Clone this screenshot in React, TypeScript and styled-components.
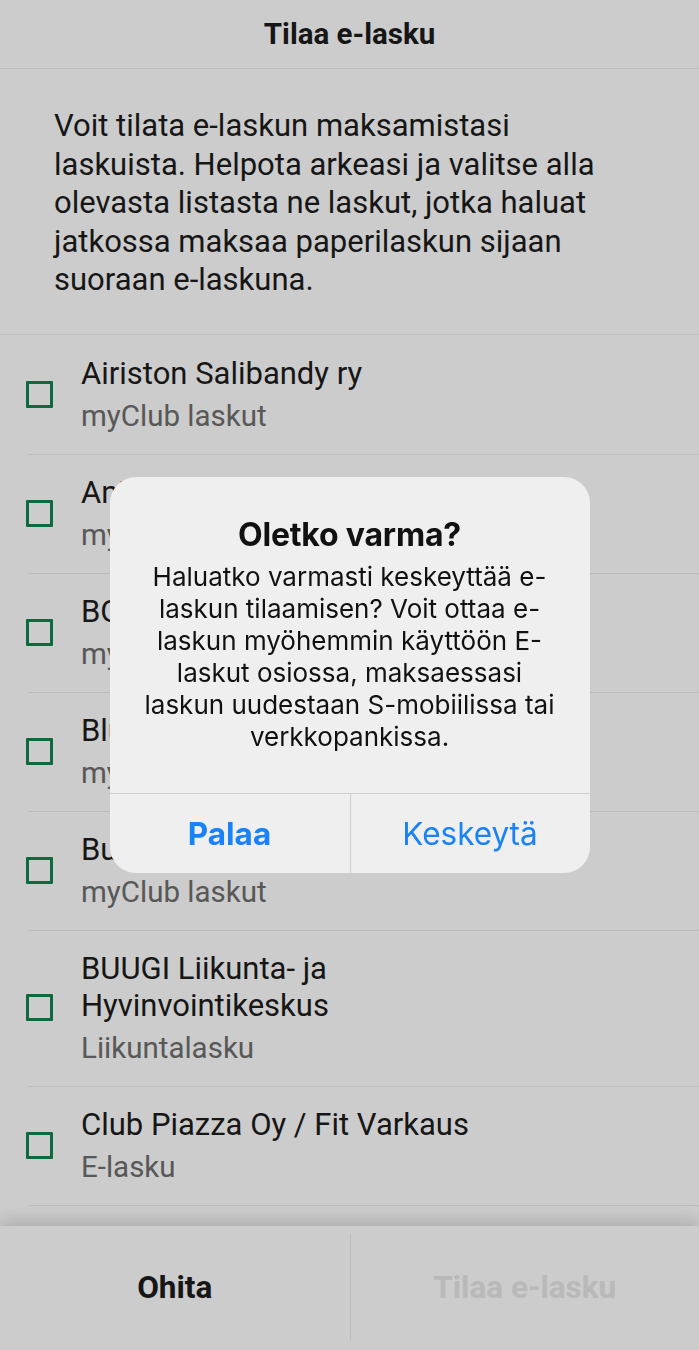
import styled, { createGlobalStyle } from 'styled-components'

const GlobalStyle = createGlobalStyle`
  html, body {
    margin: 0;
    padding: 0;
    background: #ffffff;
  }
  body {
    font-family: Roboto, 'Liberation Sans', sans-serif;
    -webkit-font-smoothing: antialiased;
  }
`

const Screen = styled.div`
  width: 699px;
  height: 1350px;
  display: flex;
  flex-direction: column;
  background: #ffffff;
  color: #1c1c1c;
  overflow: hidden;
`

const Header = styled.header`
  height: 68px;
  flex-shrink: 0;
  display: flex;
  align-items: center;
  justify-content: center;
  border-bottom: 1px solid #ececec;

  h1 {
    margin: 0;
    font-size: 29.5px;
    font-weight: 700;
  }
`

const Intro = styled.p`
  margin: 0;
  flex-shrink: 0;
  padding: 38px 30px 34px 54px;
  font-size: 31px;
  line-height: 38.5px;
  white-space: nowrap;
  border-bottom: 1px solid #ececec;
`

const List = styled.ul`
  list-style: none;
  margin: 0;
  padding: 0;
  flex: 1;
  overflow: hidden;
`

const Item = styled.li`
  display: flex;
  align-items: center;
  gap: 28px;
  padding: 20px 0 20px 26px;
  position: relative;

  & + &::before,
  &:last-child::after {
    content: '';
    position: absolute;
    left: 28px;
    right: 0;
    border-top: 1px solid #ececec;
  }

  & + &::before {
    top: 0;
  }

  &:last-child::after {
    bottom: -1px;
  }
`

const Checkbox = styled.span`
  flex-shrink: 0;
  width: 21px;
  height: 21px;
  border: 3px solid #0e864c;
  border-radius: 1px;
`

const ItemText = styled.div`
  display: flex;
  flex-direction: column;
  gap: 6px;
`

const ItemTitle = styled.div`
  font-size: 31px;
  line-height: 37px;
  color: #1c1c1c;

  div {
    height: 37px;
  }
`

const ItemSub = styled.div`
  font-size: 29.5px;
  line-height: 36px;
  height: 36px;
  color: #6e6e6e;
`

const Footer = styled.footer`
  height: 124px;
  flex-shrink: 0;
  display: grid;
  grid-template-columns: 1fr 1fr;
  align-items: stretch;
  padding: 8px 0 10px;
  box-sizing: border-box;
  background: #ffffff;
  box-shadow: 0 -6px 14px rgba(0, 0, 0, 0.14);
  position: relative;
`

const FooterButton = styled.button<{ $disabled?: boolean }>`
  border: none;
  background: transparent;
  padding: 0;
  font-family: inherit;
  font-size: 31.5px;
  font-weight: 700;
  white-space: nowrap;
  color: ${p => (p.$disabled ? '#e8e8e8' : '#1c1c1c')};

  & + & {
    border-left: 1px solid #ececec;
  }
`

const Overlay = styled.div`
  position: fixed;
  inset: 0;
  background: rgba(0, 0, 0, 0.2);
  display: flex;
  align-items: center;
  justify-content: center;
`

const Dialog = styled.div`
  width: 480px;
  border-radius: 26px;
  background: #efefef;
  overflow: hidden;
  font-family: Inter, 'Liberation Sans', sans-serif;
  color: #111111;
  text-align: center;
`

const DialogBody = styled.div`
  padding: 40px 12px 40px;

  h2 {
    margin: 0 0 8px;
    font-size: 32px;
    line-height: 36px;
    font-weight: 700;
    letter-spacing: -0.2px;
  }

  p {
    margin: 0;
    font-size: 26px;
    line-height: 32px;
    white-space: nowrap;
  }
`

const DialogActions = styled.div`
  display: grid;
  grid-template-columns: 1fr 1fr;
  border-top: 1px solid #cfcfcf;
  height: 79px;
`

const DialogButton = styled.button<{ $bold?: boolean }>`
  border: none;
  background: transparent;
  padding: 0;
  font-family: inherit;
  font-size: 31.5px;
  font-weight: ${p => (p.$bold ? 700 : 400)};
  color: #1882f6;

  & + & {
    border-left: 1px solid #cfcfcf;
  }
`

const invoices = [
  { title: ['Airiston Salibandy ry'], sub: 'myClub laskut' },
  { title: ['Aniara Tanssi ry'], sub: 'myClub laskut' },
  { title: ['BOOSTI Urheilu ry'], sub: 'myClub laskut' },
  { title: ['Blue Fox Sport ry'], sub: 'myClub laskut' },
  { title: ['Bulldogs Salibandy ry'], sub: 'myClub laskut' },
  { title: ['BUUGI Liikunta- ja', 'Hyvinvointikeskus'], sub: 'Liikuntalasku' },
  { title: ['Club Piazza Oy / Fit Varkaus'], sub: 'E-lasku' },
]

const App = () => {
  return (
    <>
      <GlobalStyle />
      <Screen>
        <Header>
          <h1>Tilaa e-lasku</h1>
        </Header>
        <Intro>
          Voit tilata e-laskun maksamistasi
          <br />
          laskuista. Helpota arkeasi ja valitse alla
          <br />
          olevasta listasta ne laskut, jotka haluat
          <br />
          jatkossa maksaa paperilaskun sijaan
          <br />
          suoraan e-laskuna.
        </Intro>
        <List>
          {invoices.map((item, index) => (
            <Item key={`invoice-${index}`}>
              <Checkbox />
              <ItemText>
                <ItemTitle>
                  {item.title.map((line, i) => (
                    <div key={i}>{line}</div>
                  ))}
                </ItemTitle>
                <ItemSub>{item.sub}</ItemSub>
              </ItemText>
            </Item>
          ))}
        </List>
        <Footer>
          <FooterButton>Ohita</FooterButton>
          <FooterButton $disabled>Tilaa e-lasku</FooterButton>
        </Footer>
      </Screen>
      <Overlay>
        <Dialog>
          <DialogBody>
            <h2>Oletko varma?</h2>
            <p>Haluatko varmasti keskeyttää e-</p>
            <p>laskun tilaamisen? Voit ottaa e-</p>
            <p>laskun myöhemmin käyttöön E-</p>
            <p>laskut osiossa, maksaessasi</p>
            <p>laskun uudestaan S-mobiilissa tai</p>
            <p>verkkopankissa.</p>
          </DialogBody>
          <DialogActions>
            <DialogButton $bold>Palaa</DialogButton>
            <DialogButton>Keskeytä</DialogButton>
          </DialogActions>
        </Dialog>
      </Overlay>
    </>
  )
}

export default App
